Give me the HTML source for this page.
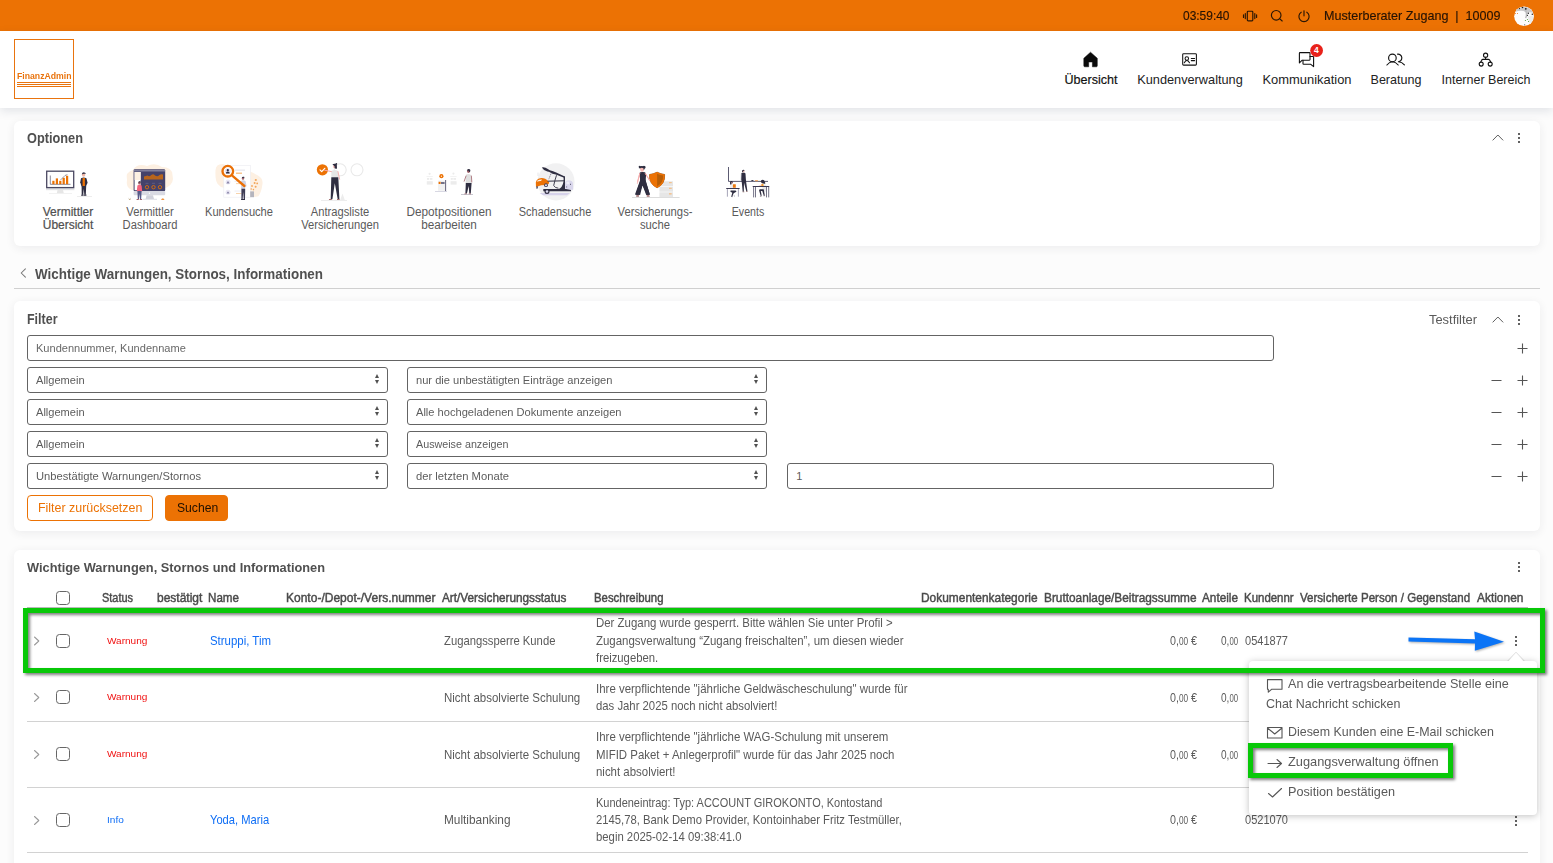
<!DOCTYPE html>
<html lang="de"><head>
<meta charset="utf-8">
<title>FinanzAdmin – Wichtige Warnungen, Stornos, Informationen</title>
<style>
*{box-sizing:border-box;margin:0;padding:0}
html,body{width:1553px;height:863px;overflow:hidden}
body{background:#fcfcfc;font-family:"Liberation Sans",sans-serif;font-size:12px;color:#333;position:relative}
.abs{position:absolute}
.t{position:absolute;white-space:nowrap;line-height:1}
svg{position:absolute;overflow:visible}
/* top bar */
#topbar{position:absolute;left:0;top:0;width:1553px;height:31px;background:#ec7204}
.tb{color:#241204;font-size:13px;-webkit-text-stroke:.15px #241204}
/* header */
#header{position:absolute;left:0;top:31px;width:1553px;height:77px;background:#fff;box-shadow:0 3px 9px rgba(50,60,90,.13)}
#logo{position:absolute;left:14px;top:39px;width:60px;height:60px;border:1px solid #e9740e;background:#fff}
#logo i{position:absolute;left:2px;width:54.2px;height:1px;background:#e9740e}
.nav{position:absolute;top:73px;font-size:13.5px;color:#222;white-space:nowrap;line-height:1}
/* cards */
.card{position:absolute;left:14px;width:1526px;background:#fff;border-radius:6px;box-shadow:0 2px 10px rgba(40,40,50,.075)}
.ctitle{position:absolute;left:27px;font-weight:bold;font-size:13.5px;color:#505050;line-height:1;white-space:nowrap}
.opt{position:absolute;top:206px;font-size:12px;line-height:13px;color:#5a5a5a;text-align:center;white-space:nowrap}
/* filter */
.inp{position:absolute;height:26px;border:1px solid #646464;border-radius:3px;background:#fff}
.it{position:absolute;left:8px;top:7px;font-size:11px;color:#5c5c5c;line-height:1;white-space:nowrap}
.ph .it{color:#686868}
.sel:after{content:"";position:absolute;right:8px;top:6.3px;border:2.6px solid transparent;border-bottom:4.2px solid #505050;border-top:0}
.sel:before{content:"";position:absolute;right:8px;top:12.2px;border:2.6px solid transparent;border-top:4.2px solid #505050;border-bottom:0}
.btn{position:absolute;top:495px;height:26px;border:1px solid #ec7204;border-radius:4px}
.btn .t{font-size:13.5px;top:5px}
/* table */
.th{position:absolute;top:590.5px;font-size:13px;color:#4a4a4a;white-space:nowrap;line-height:1;-webkit-text-stroke:.45px #4a4a4a}
.cb{position:absolute;left:56px;width:14px;height:14px;border:1px solid #666;border-radius:3.5px;background:#fff}
.sep{position:absolute;left:27px;width:1501px;height:1px;background:#d2d2d2}
.c{position:absolute;white-space:nowrap;font-size:13px;color:#5a5a5a;line-height:1}
.c small{font-size:10px}
.dl{position:absolute;left:596px;font-size:13px;line-height:1;color:#5a5a5a;white-space:nowrap}
.st{position:absolute;font-size:9.3px;line-height:1;white-space:nowrap}
.red{color:#f01212}.blue{color:#0f6ef5}
/* overlay */
.gbox{position:absolute;border:5px solid #08c808;filter:drop-shadow(2px 2px 1.6px rgba(0,0,0,.5))}
#pop{position:absolute;left:1249px;top:661px;width:288px;height:154px;background:#fff;border-radius:4px;box-shadow:0 1px 7px rgba(0,0,0,.25)}
.pi{position:absolute;white-space:nowrap;line-height:1;color:#5a5a5a;font-size:13px}
</style>
</head>
<body>

<!-- ============ TOP BAR ============ -->
<div id="topbar"></div>
<span class="t tb" style="left:1183px;top:9px;transform:scaleX(0.919);transform-origin:0 50%">03:59:40</span>
<span class="t tb" style="left:1323.9px;top:9px;transform:scaleX(0.967);transform-origin:0 50%">Musterberater Zugang&nbsp; |&nbsp; 10009</span>


<!-- ============ HEADER ============ -->
<div id="header"></div>
<div id="logo"><span class="t" style="left:1.8px;top:31.8px;font-size:9px;font-weight:bold;color:#e9740e;transform:scaleX(0.966);transform-origin:0 50%">FinanzAdmin</span><i style="top:42px;height:1.4px"></i><i style="top:44.3px;height:.9px"></i><i style="top:46.1px;height:.9px"></i></div>
<span class="nav" style="left:1091px;color:#111;-webkit-text-stroke:.2px #111;transform:translateX(-50%) scaleX(0.929)">Übersicht</span>
<span class="nav" style="left:1189.6px;transform:translateX(-50%) scaleX(0.944)">Kundenverwaltung</span>
<span class="nav" style="left:1306.8px;transform:translateX(-50%) scaleX(0.957)">Kommunikation</span>
<span class="nav" style="left:1396.2px;transform:translateX(-50%) scaleX(0.931)">Beratung</span>
<span class="nav" style="left:1485.8px;transform:translateX(-50%) scaleX(0.926)">Interner Bereich</span>
<!--NAVICONS-->

<!-- ============ OPTIONEN ============ -->
<div class="card" style="top:120.6px;height:125px"></div>
<span class="ctitle" style="top:130.8px;font-size:14px;transform:scaleX(0.911);transform-origin:0 50%">Optionen</span>
<span class="opt" style="left:68px;color:#505050;-webkit-text-stroke:.22px #505050;transform:translateX(-50%) scaleX(0.996)">Vermittler<br>Übersicht</span>
<span class="opt" style="left:150px;transform:translateX(-50%) scaleX(0.933)">Vermittler<br>Dashboard</span>
<span class="opt" style="left:239.4px;transform:translateX(-50%) scaleX(0.926)">Kundensuche</span>
<span class="opt" style="left:339.5px;transform:translateX(-50%) scaleX(0.932)">Antragsliste<br>Versicherungen</span>
<span class="opt" style="left:448.8px;transform:translateX(-50%) scaleX(0.98)">Depotpositionen<br>bearbeiten</span>
<span class="opt" style="left:554.6px;transform:translateX(-50%) scaleX(0.913)">Schadensuche</span>
<span class="opt" style="left:655.4px;transform:translateX(-50%) scaleX(0.937)">Versicherungs-<br>suche</span>
<span class="opt" style="left:747.6px;transform:translateX(-50%) scaleX(0.886)">Events</span>
<!--ILLUS-->
<svg style="left:0;top:0" width="1553" height="863" viewBox="0 0 1553 863" fill="none">
  <!-- 1 Vermittler Übersicht -->
  <g>
    <rect x="46" y="188" width="28.4" height="2.2" fill="#e3e3e6"></rect>
    <path d="M57.5 190 h5.5 l.8 3.2 h-7z" fill="#e6e6e6"></path><rect x="49" y="193.3" width="23" height=".7" fill="#ececec"></rect>
    <rect x="46.7" y="171.2" width="27" height="16.4" fill="#fff" stroke="#4b4962" stroke-width="1.3"></rect>
    <path d="M50.3 175.5 V184.3 H70.5" stroke="#3f3d56" stroke-width=".6"></path>
    <g fill="#ec7204"><rect x="52.3" y="180.8" width="2.2" height="3.4"></rect><rect x="55.8" y="178.4" width="2.2" height="5.8"></rect><rect x="59.2" y="180.8" width="2.2" height="3.4"></rect><rect x="62.6" y="177.8" width="2.2" height="6.4"></rect><rect x="66" y="175.8" width="2.2" height="8.4"></rect></g>
    <path d="M60.5 180 L65 175.5 L67.4 174.6" stroke="#3f3d56" stroke-width=".5"></path>
    <rect x="77" y="196" width="15" height=".7" fill="#e6e6e6"></rect>
    <ellipse cx="83.6" cy="174.8" rx="1.7" ry="1.9" fill="#f2b8a8"></ellipse><path d="M81.8 174.4 q.4 -2.4 2.6 -2 q1.6 .4 1.2 1.6 q-2 -.6 -3.8 .4z" fill="#2f2e41"></path>
    <path d="M81 178.2 q2.6 -1.6 5.4 0 l1.2 4.6 l-1.6 3.4 h-4.6 l-1.2 -4z" fill="#2f2e41"></path>
    <rect x="82.6" y="178" width="2.3" height="8" fill="#ec7204"></rect>
    <path d="M81.6 186 h4.6 l-.4 8.8 h-1.5 l-.5 -6 l-.6 6 h-1.5z" fill="#2f2e41"></path>
    <path d="M81.6 194.6 h2 v1.2 h-2.6z M84.4 194.6 h2 v1.2 h-2.6z" fill="#2f2e41"></path>
  </g>
  <!-- 2 Vermittler Dashboard -->
  <g>
    <path d="M127 180 q-2 -8 6 -10 q4 -7 14 -4 q8 -4 15 1 q10 0 10.5 8 q2 8 -5 12 q-6 4 -36 3 q-6 -3 -4.500 -10z" fill="#fdf0e2"></path>
    <rect x="133.6" y="191" width="31.6" height="4.3" rx="1" fill="#d9dae3"></rect>
    <path d="M146.600 195.300 h6.400 l1 3.600 h-8.400z" fill="#d0d1db"></path><rect x="142.500" y="198.800" width="14.500" height=".9" fill="#d9dae3"></rect>
    <rect x="133.6" y="169.200" width="31.600" height="21.900" rx="1.2" fill="#44426a"></rect>
    <rect x="133.6" y="170.600" width="31.600" height=".6" fill="#dcdce8"></rect>
    <rect x="134.600" y="172" width="6" height="18.200" fill="#fff"></rect><rect x="134.600" y="172" width="6" height="8" fill="#fdf0e2"></rect>
    <path d="M144 179.600 v-3 q2 -.4 3.600 -1 q2 1.600 4 -.8 q1.600 -1.400 3.400 .6 q2.400 1.800 4.400 -.4 q1.800 -1.400 3.600 -.4 v5z" fill="#b8651c"></path>
    <g stroke="#d96e0c" stroke-width=".9"><circle cx="147" cy="187.200" r="1.700"></circle><circle cx="153.500" cy="187.200" r="1.700"></circle><circle cx="160" cy="187.200" r="1.700"></circle></g>
    <g stroke="#77759a" stroke-width=".5"><path d="M145.500 183.300 h3 M152 183.300 h3 M158.500 183.300 h3"></path></g>
    <circle cx="149.500" cy="193.200" r=".7" fill="#fff"></circle>
    <ellipse cx="139.400" cy="183" rx="1.300" ry="1.500" fill="#a0616a"></ellipse><path d="M138.200 182.600 q.6 -1.800 2.400 -1 q.6 .4 .2 1z" fill="#2f2e41"></path>
    <path d="M137.400 185.400 q2 -1.200 4.200 0 l.6 5.800 h-5.400z" fill="#f4627c"></path>
    <path d="M137.400 191 h4.200 l-.4 8 h-1.200 l-.5 -5.600 l-.5 5.600 h-1.200z" fill="#575a89"></path>
    <path d="M136.800 199 h2 v.9 h-2.400z M140 199 h2 v.9 h-2.400z" fill="#a0616a"></path>
    <path d="M128.500 197.600 l1.200 1.800 l1.200 -1.800 l-.6 2.400 h-1.200z" fill="#b9a27c"></path><path d="M161 199.800 q1.800 -2.400 3.600 0z" fill="#ec7204"></path>
  </g>
  <!-- 3 Kundensuche -->
  <g>
    <path d="M224.500 164.200 q-8.500 -1.200 -9 6 q-.5 10 2 13.500 q2.500 3.500 7 4.300z M250 171.600 q4 1.600 8 4 q5.400 3 4.400 9 q-1 8 -4 11.600 q-4 1.400 -8.400 .4z" fill="#fdf0e2"></path>
    <rect x="223.800" y="165.500" width="26.600" height="31.700" fill="#fff" stroke="#ececf1" stroke-width=".6"></rect>
    <circle cx="227.800" cy="171.200" r="2.900" fill="#e7e3f3"></circle><path d="M226 172.600 q1.800 -2 3.600 0 v1 h-3.600z" fill="#2f2e41"></path><circle cx="227.800" cy="170.200" r="1.100" fill="#2f2e41"></circle>
    <circle cx="228" cy="182" r="2.500" fill="#ebe8f5"></circle><path d="M226.500 183.600 q1.500 -4.600 3 0z" fill="#8b88aa"></path>
    <circle cx="228" cy="192.200" r="2.500" fill="#ebe8f5"></circle><path d="M226.600 193.600 q1.400 -4 2.800 0z" fill="#8b88aa"></path>
    <rect x="234.500" y="169.600" width="10.500" height="1.100" fill="#e4e4ec"></rect><rect x="236" y="172.600" width="6" height="1.200" fill="#f5b676"></rect>
    <rect x="234.500" y="181" width="7" height=".9" fill="#ececf2"></rect><rect x="236" y="183.200" width="5" height=".9" fill="#f7cfa3"></rect>
    <rect x="234.500" y="190.600" width="8.500" height=".9" fill="#ececf2"></rect><rect x="236" y="193" width="5.500" height=".9" fill="#f7cfa3"></rect>
    <ellipse cx="243" cy="178.400" rx="1.200" ry="1.400" fill="#a0616a"></ellipse><path d="M241.800 178 q.4 -1.800 2.200 -1.200 q.8 .4 .4 1z" fill="#2f2e41"></path>
    <path d="M241 181 q2.400 -1.400 4.600 .2 l1 5 l-1.200 .6 l-.4 2.200 h-3.800z" fill="#cfd3e3"></path>
    <path d="M241.400 188.800 h3.800 l-.2 10.200 h-1.300 l-.5 -7 l-.5 7 h-1.300z" fill="#3f3d56"></path>
    <path d="M241.200 199 h3.800 v.9 h-4z" fill="#2f2e41"></path>
    <circle cx="227.800" cy="171.200" r="5.300" stroke="#ea7006" stroke-width="2.300"></circle>
    <path d="M232.200 175.600 L244.400 186" stroke="#ea7006" stroke-width="2.300" stroke-linecap="round"></path>
    <rect x="250.200" y="191.400" width="3.800" height="5.800" fill="#b5b5bd"></rect>
    <g fill="#f2a65c"><circle cx="255.800" cy="180" r="1.100"></circle><circle cx="254.600" cy="183" r="1"></circle><circle cx="257.200" cy="183.400" r=".9"></circle><circle cx="252" cy="186" r=".9"></circle><circle cx="255.600" cy="186.800" r="1"></circle><circle cx="251.200" cy="189" r=".8"></circle><circle cx="253.400" cy="189.600" r=".8"></circle></g>
  </g>
  <!-- 4 Antragsliste -->
  <g>
    <circle cx="340.200" cy="169.800" r="6" stroke="#e9e9e9" stroke-width="1.100"></circle><circle cx="357" cy="169.800" r="6" stroke="#e9e9e9" stroke-width="1.100"></circle>
    <circle cx="322.400" cy="169.800" r="5.600" fill="#ec7204"></circle><path d="M320 169.900 l1.700 1.700 l3.100 -3.300" stroke="#fff" stroke-width="1.200" stroke-linecap="round" stroke-linejoin="round"></path>
    <rect x="321" y="200.200" width="26" height=".7" fill="#e6e6e6"></rect>
    <path d="M340.200 200 l2.300 -6.400 l2.300 6.400z" fill="#ededed"></path>
    <ellipse cx="334.800" cy="166.400" rx="1.700" ry="1.900" fill="#f7b9b4"></ellipse>
    <path d="M332.400 164.600 q1 -1.200 3 -.8 q.6 -1.200 1.600 -.6 q.6 .8 -.2 1.400 l.2 4 q-1.800 .6 -2.400 -.6 q.4 -1.800 -.8 -2.600z" fill="#2f2e41"></path>
    <path d="M331.400 171 q3.300 -1.800 6.600 0 l.3 6.300 h-7z" fill="#e6e6e6"></path>
    <path d="M331.400 171.600 L324.600 170.200" stroke="#f7a8a8" stroke-width="1" stroke-linecap="round"></path>
    <path d="M338 171.600 l1.600 7.600" stroke="#f7a8a8" stroke-width=".9" stroke-linecap="round"></path>
    <path d="M331.300 177.200 h7 l1.100 22 h-1.700 l-2.900 -16 l-2.400 16 h-1.700z" fill="#2f2e41"></path>
    <path d="M329.200 199.100 h2.600 v1 h-3z M337 199.100 h2.600 v1 h-2.600z" fill="#a36d6d"></path>
  </g>
  <!-- 5 Depotpositionen -->
  <g>
    <g fill="#ececec"><rect x="426.500" y="176.200" width="6.400" height=".6"></rect><rect x="427" y="178" width="2" height="1.800"></rect><rect x="429.800" y="178" width="2.600" height="1.800"></rect><rect x="426.800" y="181.200" width="6" height="3.400"></rect><circle cx="429.600" cy="173.800" r="1.100"></circle>
    <rect x="450.200" y="176.200" width="6.400" height=".6"></rect><rect x="450.800" y="178" width="2" height="1.800"></rect><rect x="453.400" y="178" width="2.600" height="1.800"></rect><rect x="450.600" y="181.200" width="6" height="3.400"></rect><circle cx="453.400" cy="173.600" r="1.100"></circle></g>
    <rect x="438" y="180.600" width="7.600" height="10.200" fill="#f1f1f1"></rect>
    <rect x="438.600" y="181.800" width="2" height="2.200" fill="#ec7204"></rect><rect x="441" y="182.200" width="3.600" height="1.600" fill="#55536e"></rect>
    <rect x="445.200" y="180" width=".9" height="11.200" fill="#55536e"></rect>
    <rect x="435" y="191" width="12" height=".8" fill="#cfcfdc"></rect>
    <circle cx="441.400" cy="176.200" r="2.100" fill="#ec7204"></circle><circle cx="441.400" cy="176.200" r=".6" fill="#fff"></circle>
    <rect x="461" y="194" width="12" height=".8" fill="#b9b9c4"></rect>
    <ellipse cx="468.500" cy="171.200" rx="1.500" ry="1.700" fill="#a0616a"></ellipse><path d="M466.800 170.600 q.4 -2 2.400 -1.600 q1.400 .4 1.200 2 q-.6 1.400 -1.400 1 q.2 -1.400 -2.200 -1.400z" fill="#2f2e41"></path>
    <path d="M466 174.600 q2.600 -1.600 5 .4 l.8 8.200 h-6.200z" fill="#e0e0e0"></path>
    <path d="M466 176 l-1.800 5.200" stroke="#a0616a" stroke-width=".8" stroke-linecap="round"></path><path d="M471.400 176 l.4 6" stroke="#a0616a" stroke-width=".8" stroke-linecap="round"></path>
    <path d="M465.800 183 h5.800 l-.8 10.600 h-1.500 l-.6 -7.600 l-1.800 7.600 h-1.500z" fill="#2f2e41"></path>
    <path d="M464.600 193.400 h2.200 v.8 h-2.600z M468.800 193.400 h2.200 v.8 h-2.400z" fill="#a0616a"></path>
  </g>
  <!-- 6 Schadensuche -->
  <g>
    <circle cx="556" cy="181.900" r="18.600" fill="#f1f1f2"></circle>
    <path d="M539.600 193 H570 L567 195.300 H543z" fill="#d6d2ea"></path>
    <path d="M538 172.600 V176" stroke="#dcdce2" stroke-width=".7"></path>
    <path d="M565.200 182.400 q.4 -2 2.800 -2 h2 q2.400 .2 2.900 2.600 l.3 6.800 h-8z" fill="#d9d6ec"></path>
    <rect x="566.400" y="181.600" width="3" height="2.600" fill="#eeedf6"></rect><rect x="570" y="183.800" width=".9" height="1" fill="#3f3d56"></rect><rect x="566.400" y="186.400" width=".7" height="1.100" fill="#3f3d56"></rect>
    <path d="M535.800 182.400 q.4 -2.600 2.600 -3.600 q3.400 -1.400 6.800 0 l2.200 1.400 l1.800 2.400 l-.6 1.400 l-3 1 l-4.400 .2 l-5.200 1.800z" fill="#ec7204"></path>
    <path d="M537.200 180.800 q2 -1.600 4.800 -1.400 l-1 1.600 q-2 -.2 -3.800 .8z" fill="#fff" opacity=".9"></path>
    <circle cx="546" cy="185.200" r="1.900" fill="#3f3d56"></circle><circle cx="546" cy="185.200" r="1" fill="#e8e6f2"></circle>
    <path d="M536.400 186.600 q.8 -.6 1.600 0 l-.4 2 q-.8 .4 -1.200 -.2z" fill="#3f3d56"></path>
    <path d="M541.800 167.400 q3.200 -.6 6 1.600 q1.400 .8 2 1.200 q3.400 .6 6.400 2.400 l8.600 3.800 v1.600 l-9 -3.400 q-3.400 -.6 -6.400 -2.600 q-.6 -.4 -2 -.6 q-3.600 -.6 -5.600 -4z" fill="#2f2e41"></path>
    <path d="M551.600 172.200 L548.700 179.400" stroke="#3f3d56" stroke-width=".6" stroke-dasharray="1.200 .7"></path>
    <path d="M556.400 175.600 q-1.600 4.600 -2.700 10 q1.400 2.400 4.300 2.600" stroke="#2f2e41" stroke-width=".9" stroke-linecap="round"></path>
    <path d="M547.600 181.200 L564.200 180.800" stroke="#2f2e41" stroke-width="1"></path>
    <path d="M563.600 176.400 h1.400 V189.600 H557.500 q5.200 -1.400 6.100 -8.600z" fill="#2f2e41"></path>
    <path d="M543.300 189.100 H566 l5 .8 v1.400 H543.300z" fill="#2f2e41"></path>
    <circle cx="547" cy="191.500" r="2.500" fill="#2f2e41"></circle><circle cx="547" cy="191.500" r="1.300" fill="#dcd9ee"></circle>
  </g>
  <!-- 7 Versicherungssuche -->
  <g>
    <rect x="632" y="197.100" width="47.600" height=".8" fill="#d3d3d3"></rect>
    <g fill="#e6e6e6"><rect x="659.400" y="181.300" width="13.600" height="4.900"></rect><rect x="659.400" y="186.800" width="13.600" height="4.900"></rect><rect x="659.400" y="192.300" width="13.600" height="4.800"></rect></g>
    <g fill="#f5bd84"><rect x="669" y="182.200" width="2.600" height=".9"></rect><rect x="669" y="187.900" width="2.600" height=".9"></rect><rect x="669" y="193.400" width="2.600" height=".9"></rect></g>
    <path d="M657.100 172.200 q3.600 1.800 7.500 2.300 q.8 9.200 -7.500 13.300 q-8.300 -4.100 -7.500 -13.300 q3.900 -.5 7.500 -2.300z" fill="#ec7204" stroke="#5a3410" stroke-width=".6"></path>
    <path d="M657.100 174 q2.900 1.300 5.800 1.700 q.4 7 -5.800 10.300z" fill="#ba5f06"></path>
    <ellipse cx="642.100" cy="169.900" rx="1.700" ry="1.900" fill="#f7b9b4"></ellipse>
    <path d="M638.800 167.400 q.6 -1.500 2 -.6 q1.300 -.7 2.500 -.2 q1.300 -1.300 2.300 .2 q.2 1.500 -1 2 q-.2 1 -.8 1.400 q-.2 -1.600 -1.400 -1.700 q-1.500 .5 -2.400 -.2 q-1.300 .3 -1.200 -.9z" fill="#2f2e41"></path>
    <path d="M639.600 172.900 q3.200 -1.200 6.200 0 l.2 3 l-.6 3.600 l4.400 14.900 l-3.600 .6 l-3.700 -10.100 l-2.400 10.100 l-5.100 -.6 l5.400 -14.900 l-.8 -3.400z" fill="#2f2e41"></path>
    <path d="M639.700 173.800 l-2.300 9.600" stroke="#f9b1b1" stroke-width=".9" stroke-linecap="round"></path><path d="M645.700 173.800 l4.200 7" stroke="#f9b1b1" stroke-width=".9" stroke-linecap="round"></path>
    <path d="M636.800 195.500 h2.200 v1.100 h-2.600z M647 195.500 h2.200 l.6 1.100 h-2.800z" fill="#8a6870"></path>
  </g>
    <g fill="#f5c08a"><rect x="669" y="182.200" width="2.600" height=".9"></rect><rect x="669" y="187.800" width="2.600" height=".9"></rect><rect x="669" y="193.400" width="2.600" height=".9"></rect></g>
    <path d="M657.100 172 q3.600 1.800 7.600 2.400 q.8 9.400 -7.600 13.600 q-8.400 -4.200 -7.600 -13.600 q4 -.6 7.600 -2.400z" fill="#ec7204"></path>
    <path d="M657.100 173.800 q3 1.400 6 1.800 q.4 7.400 -6 10.800z" fill="#b85e06"></path>
    <ellipse cx="641.800" cy="168.800" rx="1.700" ry="1.900" fill="#f7b9b4"></ellipse>
    <path d="M638.600 166.600 q.8 -1.400 2 -.4 q1.200 -.6 2.400 0 q1.200 -1 2 .4 q-.2 1.400 -1.400 1.600 q-1.800 -1 -3.600 0 q-1.200 -.200 -1.400 -1.600z" fill="#2f2e41"></path>
    <path d="M639.800 172.600 q2.600 -1.400 5.400 0 l.5 8.600 l4.300 13.600 l-3 .2 l-4.400 -9.400 l-4 9.400 l-3.100 -.2 l4.600 -13.600z" fill="#2f2e41"></path>
    <path d="M639.800 173.400 l-2.200 8" stroke="#f7a8a8" stroke-width=".9" stroke-linecap="round"></path><path d="M645.200 173.400 l4.200 6.800" stroke="#f7a8a8" stroke-width=".9" stroke-linecap="round"></path>
    <path d="M636.400 195.200 h2.400 v1.400 h-2.800z M646.600 195.200 h2.400 l.6 1.400 h-3z" fill="#a36d6d"></path>
  
  <!-- 8 Events -->
  <g>
    <path d="M728.500 167 V181.400 H768" stroke="#4a4862" stroke-width=".9"></path>
    <path d="M751.100 181 q.2 -1.100 1.300 -1.100 q1.100 0 1.300 1.100z" fill="#2f2e41"></path><rect x="755" y="180.100" width="3" height="1.100" rx=".3" fill="#f2b06a"></rect>
    <!-- standing -->
    <ellipse cx="743.400" cy="171.300" rx="1.050" ry="1.250" fill="#f0b8ae"></ellipse><path d="M742 171.600 q-.2 -1.800 1.400 -1.900 q1 0 1.300 .7 q-1 .1 -1.300 .6 q-.4 .8 -.6 1.500z" fill="#2f2e41"></path>
    <path d="M741.200 173.700 q.2 -.9 1.100 -.9 h2.100 q1 0 1.100 .9 l.4 5.800 l.4 3.400 l1.100 8.100 l-1.100 .3 l-2.300 -8.600 l-.2 9 h-1.100 l-.9 -9.300 l-.6 -3z" fill="#2f2e41"></path>
    <path d="M741 174 l-.5 6.600" stroke="#e4e4e8" stroke-width=".7" stroke-linecap="round"></path>
    <path d="M742.800 191.600 h1.500 v.6 h-1.700z M746 191.300 l1.400 -.2 l.4 .6 l-1.600 .3z" fill="#8f6a6a"></path>
    <!-- left desk + person -->
    <circle cx="731.400" cy="182.300" r="1.350" fill="#2f2e41"></circle><path d="M730.200 182.400 h1.400 l.3 2.300 h-1.900z" fill="#2f2e41"></path><circle cx="731.900" cy="183" r=".75" fill="#f0b8ae"></circle>
    <path d="M730.300 184.600 q1.300 -.8 2.400 0 l.5 3.400 h-3.300z" fill="#f1f1f3"></path>
    <rect x="732.900" y="184.300" width="2.900" height="3.500" rx=".3" fill="#ec7a10"></rect>
    <rect x="726.100" y="188" width="13.600" height="1.100" rx=".4" fill="#3b3950"></rect>
    <path d="M727.400 189.100 V196.700 M738.400 189.100 V196.700" stroke="#8f8da4" stroke-width=".8"></path>
    <path d="M730.600 190.400 h4.800 q1.300 .3 .9 1.400 l-2.600 1.400 l-1.400 3.200 l-.9 -.4 l.9 -3.200 l-1.900 -1z" fill="#2f2e41"></path>
    <path d="M731.600 196 l1 .5 l-.5 .7 l-1 -.6z M733.800 195.200 l.9 .9 l-.6 .5z" fill="#2f2e41"></path>
    <!-- right desk + person -->
    <rect x="762.400" y="184.400" width="3.900" height="7.300" rx="1.200" fill="#e8e8ea"></rect>
    <path d="M760.700 181.800 q.1 -2 2 -2 q1.900 .1 2 1.900 q.8 1 .6 1.900 q-1 .5 -1.900 -.2 q-1.500 .3 -2.700 -1.600z" fill="#2f2e41"></path>
    <path d="M761.300 184 q1 -.6 2.100 0 l.3 2.600 h-2.500z" fill="#f09a2e"></path>
    <path d="M761.400 185 l-2.800 1.300" stroke="#f0b8ae" stroke-width=".7" stroke-linecap="round"></path>
    <rect x="752.600" y="186" width="16.800" height="1.050" rx=".4" fill="#3b3950"></rect>
    <path d="M753.600 187 V197.400 M755.500 187 V197.400 M766.500 187 V197.400 M768.700 187 V197.400" stroke="#4a4862" stroke-width=".75"></path>
    <path d="M759.600 189.200 h3.600 q.9 .2 .7 1.100 l.9 5.200 l-1 .3 l-1.500 -4.700 h-1.500 l.9 4.700 l-1 .3 l-1.600 -5.600z" fill="#2f2e41"></path>
    <path d="M760 196 h1.500 v.6 h-1.700z M763.600 195.600 l1.300 -.2 l.3 .6 l-1.500 .3z" fill="#6a5560"></path>
  </g>
</svg>
<!--/ILLUS-->

<!-- ============ SECTION HEADING ============ -->
<span class="t" style="left:35px;top:268px;font-size:13.8px;font-weight:bold;color:#505050;transform:scaleX(0.973);transform-origin:0 50%">Wichtige Warnungen, Stornos, Informationen</span>
<div class="abs" style="left:14px;top:288px;width:1526px;height:1px;background:#d0d0d0"></div>

<!-- ============ FILTER ============ -->
<div class="card" style="top:301px;height:230px"></div>
<span class="ctitle" style="top:313.2px;font-size:13.8px;transform:scaleX(0.904);transform-origin:0 50%">Filter</span>
<span class="t" style="left:1429.4px;top:313px;font-size:13px;color:#5a5a5a;transform:scaleX(0.992);transform-origin:0 50%">Testfilter</span>
<div class="inp ph" style="left:27px;top:335px;width:1247px;height:25.5px"><span class="it" style="left:8.2px;transform:scaleX(1.004);transform-origin:0 50%">Kundennummer, Kundenname</span></div>
<div class="inp sel" style="left:27px;top:367px;width:361px"><span class="it" style="left:8.2px;transform:scaleX(1.006);transform-origin:0 50%">Allgemein</span></div>
<div class="inp sel" style="left:407px;top:367px;width:360px"><span class="it" style="left:8.2px;transform:scaleX(1.01);transform-origin:0 50%">nur die unbestätigten Einträge anzeigen</span></div>
<div class="inp sel" style="left:27px;top:399px;width:361px"><span class="it" style="left:8.2px;transform:scaleX(1.006);transform-origin:0 50%">Allgemein</span></div>
<div class="inp sel" style="left:407px;top:399px;width:360px"><span class="it" style="left:8.2px;transform:scaleX(1.009);transform-origin:0 50%">Alle hochgeladenen Dokumente anzeigen</span></div>
<div class="inp sel" style="left:27px;top:431px;width:361px"><span class="it" style="left:8.2px;transform:scaleX(1.006);transform-origin:0 50%">Allgemein</span></div>
<div class="inp sel" style="left:407px;top:431px;width:360px"><span class="it" style="left:8.2px;transform:scaleX(0.976);transform-origin:0 50%">Ausweise anzeigen</span></div>
<div class="inp sel" style="left:27px;top:463px;width:361px"><span class="it" style="left:8.2px;transform:scaleX(1.017);transform-origin:0 50%">Unbestätigte Warnungen/Stornos</span></div>
<div class="inp sel" style="left:407px;top:463px;width:360px"><span class="it" style="left:8.2px;transform:scaleX(1.021);transform-origin:0 50%">der letzten Monate</span></div>
<div class="inp" style="left:787px;top:463px;width:487px"><span class="it" style="left:8.2px">1</span></div>
<div class="btn" style="left:27px;width:126px;background:#fff"><span class="t" style="left:10px;color:#ec7204;transform:scaleX(0.921);transform-origin:0 50%">Filter zurücksetzen</span></div>
<div class="btn" style="left:165px;width:63px;background:#ec7204"><span class="t" style="left:10.5px;color:#1e0f00;transform:scaleX(0.9);transform-origin:0 50%">Suchen</span></div>
<!--FILTERICONS-->

<!-- ============ TABLE ============ -->
<div class="card" style="top:550px;height:330px"></div>
<span class="ctitle" style="top:561.3px;font-size:13.5px;transform:scaleX(0.948);transform-origin:0 50%">Wichtige Warnungen, Stornos und Informationen</span>
<div class="cb" style="top:590.5px"></div>
<span class="th" style="left:102px;transform:scaleX(0.841);transform-origin:0 50%">Status</span>
<span class="th" style="left:156.5px;transform:scaleX(0.922);transform-origin:0 50%">bestätigt</span>
<span class="th" style="left:208px;transform:scaleX(0.894);transform-origin:0 50%">Name</span>
<span class="th" style="left:286px;transform:scaleX(0.924);transform-origin:0 50%">Konto-/Depot-/Vers.nummer</span>
<span class="th" style="left:442px;transform:scaleX(0.906);transform-origin:0 50%">Art/Versicherungsstatus</span>
<span class="th" style="left:594px;transform:scaleX(0.874);transform-origin:0 50%">Beschreibung</span>
<span class="th" style="left:921px;transform:scaleX(0.917);transform-origin:0 50%">Dokumentenkategorie</span>
<span class="th" style="left:1043.7px;transform:scaleX(0.91);transform-origin:0 50%">Bruttoanlage/Beitragssumme</span>
<span class="th" style="left:1202px;transform:scaleX(0.906);transform-origin:0 50%">Anteile</span>
<span class="th" style="left:1243.8px;transform:scaleX(0.881);transform-origin:0 50%">Kundennr</span>
<span class="th" style="left:1299.7px;transform:scaleX(0.888);transform-origin:0 50%">Versicherte Person / Gegenstand</span>
<span class="th" style="left:1477px;transform:scaleX(0.917);transform-origin:0 50%">Aktionen</span>
<div class="sep" style="top:607px;background:#bdbdbd"></div>
<!--ROWS-->
<!-- row 1 -->
<div class="cb" style="top:634px"></div>
<span class="st red" style="left:106.8px;top:636.6px;transform:scaleX(1.08);transform-origin:0 50%">Warnung</span>
<span class="c blue" style="left:210.2px;top:633.8px;transform:scaleX(0.879);transform-origin:0 50%">Struppi, Tim</span>
<span class="c" style="left:443.5px;top:633.8px;transform:scaleX(0.866);transform-origin:0 50%">Zugangssperre Kunde</span>
<span class="dl" style="top:616px;transform:scaleX(0.88);transform-origin:0 50%">Der Zugang wurde gesperrt. Bitte wählen Sie unter Profil &gt;</span>
<span class="dl" style="top:633.8px;transform:scaleX(0.881);transform-origin:0 50%">Zugangsverwaltung “Zugang freischalten”, um diesen wieder</span>
<span class="dl" style="top:650.9px;transform:scaleX(0.869);transform-origin:0 50%">freizugeben.</span>
<span class="c" style="left:1169.6px;top:633.8px;transform:scaleX(0.823);transform-origin:0 50%">0,<small>00</small> €</span>
<span class="c" style="left:1220.6px;top:633.8px;transform:scaleX(0.774);transform-origin:0 50%">0,<small>00</small></span>
<span class="c" style="left:1244.8px;top:633.8px;transform:scaleX(0.849);transform-origin:0 50%">0541877</span>
<!-- row 2 -->
<div class="cb" style="top:690px"></div>
<span class="st red" style="left:106.8px;top:693.1px;transform:scaleX(1.08);transform-origin:0 50%">Warnung</span>
<span class="c" style="left:443.5px;top:691.4px;transform:scaleX(0.885);transform-origin:0 50%">Nicht absolvierte Schulung</span>
<span class="dl" style="top:682.1px;transform:scaleX(0.882);transform-origin:0 50%">Ihre verpflichtende "jährliche Geldwäscheschulung" wurde für</span>
<span class="dl" style="top:698.8px;transform:scaleX(0.871);transform-origin:0 50%">das Jahr 2025 noch nicht absolviert!</span>
<span class="c" style="left:1169.6px;top:691.4px;transform:scaleX(0.823);transform-origin:0 50%">0,<small>00</small> €</span>
<span class="c" style="left:1220.6px;top:691.4px;transform:scaleX(0.774);transform-origin:0 50%">0,<small>00</small></span>
<div class="sep" style="top:721px"></div>
<!-- row 3 -->
<div class="cb" style="top:747px"></div>
<span class="st red" style="left:106.8px;top:750.1px;transform:scaleX(1.08);transform-origin:0 50%">Warnung</span>
<span class="c" style="left:443.5px;top:747.5px;transform:scaleX(0.885);transform-origin:0 50%">Nicht absolvierte Schulung</span>
<span class="dl" style="top:730.2px;transform:scaleX(0.882);transform-origin:0 50%">Ihre verpflichtende "jährliche WAG-Schulung mit unserem</span>
<span class="dl" style="top:747.5px;transform:scaleX(0.879);transform-origin:0 50%">MIFID Paket + Anlegerprofil" wurde für das Jahr 2025 noch</span>
<span class="dl" style="top:764.7px;transform:scaleX(0.88);transform-origin:0 50%">nicht absolviert!</span>
<span class="c" style="left:1169.6px;top:747.5px;transform:scaleX(0.823);transform-origin:0 50%">0,<small>00</small> €</span>
<span class="c" style="left:1220.6px;top:747.5px;transform:scaleX(0.774);transform-origin:0 50%">0,<small>00</small></span>
<div class="sep" style="top:787px"></div>
<!-- row 4 -->
<div class="cb" style="top:813px"></div>
<span class="st blue" style="left:107.4px;top:816.1px;transform:scaleX(1.083);transform-origin:0 50%">Info</span>
<span class="c blue" style="left:210.2px;top:812.9px;transform:scaleX(0.858);transform-origin:0 50%">Yoda, Maria</span>
<span class="c" style="left:443.5px;top:812.9px;transform:scaleX(0.911);transform-origin:0 50%">Multibanking</span>
<span class="dl" style="top:795.9px;transform:scaleX(0.845);transform-origin:0 50%">Kundeneintrag: Typ: ACCOUNT GIROKONTO, Kontostand</span>
<span class="dl" style="top:812.9px;transform:scaleX(0.868);transform-origin:0 50%">2145,78, Bank Demo Provider, Kontoinhaber Fritz Testmüller,</span>
<span class="dl" style="top:829.9px;transform:scaleX(0.871);transform-origin:0 50%">begin 2025-02-14 09:38:41.0</span>
<span class="c" style="left:1169.6px;top:812.9px;transform:scaleX(0.823);transform-origin:0 50%">0,<small>00</small> €</span>
<span class="c" style="left:1244.8px;top:812.9px;transform:scaleX(0.849);transform-origin:0 50%">0521070</span>
<div class="sep" style="top:852px"></div>
<!-- row chevrons + kebabs -->
<svg style="left:0;top:0" width="1553" height="863" viewBox="0 0 1553 863" fill="none">
  <g stroke="#999" stroke-width="1.05" stroke-linecap="round" stroke-linejoin="round">
    <path d="M34.5 637 L38.8 641 L34.5 645"></path><path d="M34.5 693.5 L38.8 697.5 L34.5 701.5"></path>
    <path d="M34.5 750.5 L38.8 754.5 L34.5 758.5"></path><path d="M34.5 816.5 L38.8 820.5 L34.5 824.5"></path>
  </g>
  <g fill="#616161">
    <rect x="1515" y="636" width="2" height="2"></rect><rect x="1515" y="640" width="2" height="2"></rect><rect x="1515" y="644" width="2" height="2"></rect>
    <rect x="1515" y="816" width="2" height="2"></rect><rect x="1515" y="820" width="2" height="2"></rect><rect x="1515" y="824" width="2" height="2"></rect>
  </g>
</svg>
<!--/ROWS-->

<!--ICONS-->
<svg style="left:0;top:0" width="1553" height="863" viewBox="0 0 1553 863" fill="none">
  <!-- top bar icons -->
  <g stroke="#2a1605" stroke-width="1.15" stroke-linecap="round" stroke-linejoin="round">
    <rect x="1247.3" y="11.2" width="5.5" height="9.7" rx=".8"></rect>
    <path d="M1245.3 13.6 V18.6 M1243.5 14.8 V17.4 M1254.8 13.6 V18.6 M1256.6 14.8 V17.4"></path>
    <circle cx="1276.2" cy="15.3" r="4.8"></circle><path d="M1279.8 18.8 L1282.2 21"></path>
    <path d="M1304 10.8 V15.8"></path><path d="M1301.2 12.2 A5.1 5.1 0 1 0 1306.8 12.2"></path>
  </g>
  <!-- avatar -->
  <clipPath id="avc"><circle cx="1524" cy="16.300" r="9.800"></circle></clipPath>
  <circle cx="1524" cy="16.300" r="9.800" fill="#fdfdfd"></circle>
  <g clip-path="url(#avc)">
    <path d="M1516 9.500 q6 -4 12 -2 q4 2 5.500 6 l-4 1 q-3 -2 -6 -3.500 q-4 -.5 -7.500 .5z" fill="#c9c9cb"></path>
    <path d="M1526.500 13 q4 -1.500 8 .5 v3 q-4 -1 -7.500 -.5z" fill="#f6f6f6"></path>
    <path d="M1527.500 16 h7 v7 l-4 3 q-2 -5 -3 -10z" fill="#ececec"></path>
    <path d="M1524.500 9 q1.500 1 2 4 q.5 3 -1 5" stroke="#bdbdbf" stroke-width="1.600" fill="none"></path>
    <g fill="#1c1c1e"><circle cx="1522.500" cy="7.500" r=".8"></circle><circle cx="1519.400" cy="8.600" r=".6"></circle><circle cx="1525.800" cy="8.800" r=".9"></circle><circle cx="1528.300" cy="13.300" r=".7"></circle><circle cx="1527.400" cy="15.300" r=".6"></circle><circle cx="1532.300" cy="14.300" r=".7"></circle></g>
    <g fill="#4f9a3c"><circle cx="1527.400" cy="19.500" r=".55"></circle><circle cx="1528.500" cy="21.500" r=".55"></circle><circle cx="1525.400" cy="20.500" r=".6"></circle></g>
    <g fill="#e0701a"><circle cx="1515.400" cy="13.400" r=".5"></circle><circle cx="1517.500" cy="13.400" r=".5"></circle></g>
    <rect x="1524" y="24" width="1.200" height="1.600" fill="#9aa0a8"></rect>
  </g>
  <!-- nav: home -->
  <path d="M1090.5 52.2 L1097.3 58.3 V65.8 a1 1 0 0 1 -1 1 H1092.4 V62 H1088.7 V66.8 H1084.8 a1 1 0 0 1 -1 -1 V58.3 Z" fill="#0a0a0a" stroke="#0a0a0a" stroke-width=".5" stroke-linejoin="round"></path>
  <!-- nav: id card -->
  <g stroke="#111" stroke-width="1.05" stroke-linecap="round" stroke-linejoin="round">
    <rect x="1182.7" y="53.7" width="13.7" height="11.4" rx=".9"></rect>
    <circle cx="1186.8" cy="58.500" r="1.750"></circle><path d="M1184.300 62.700 q2.500 -4.300 5.200 0 M1191.300 58.400 H1194.600 M1191.300 60.600 H1194.600"></path>
  </g>
  <!-- nav: chat -->
  <g stroke="#111" stroke-width="1.1" stroke-linecap="round" stroke-linejoin="round">
    <path d="M1299.400 53.200 q0 -.6 .6 -.6 H1309.400 q.6 0 .6 .6 V59.600 q0 .6 -.6 .6 H1302.200 L1299.400 62.900 Z"></path>
    <path d="M1310 56.500 H1313 q.6 0 .6 .6 V66.600 L1310.800 64.300 H1303.600 q-.6 0 -.6 -.6 V60.300"></path>
  </g>
  <circle cx="1316.6" cy="50.5" r="6.4" fill="#e8211a"></circle>
  <!-- nav: people -->
  <g stroke="#111" stroke-width="1.15" stroke-linecap="round" stroke-linejoin="round">
    <circle cx="1392.4" cy="57.900" r="3.800"></circle><path d="M1386.900 65 Q1389.400 61.900 1392.400 61.800 Q1395.600 61.900 1398.200 65"></path>
    <path d="M1397.600 54.150 A3.800 3.800 0 1 1 1398.400 61.750 Q1402 61.900 1404.400 64.800"></path>
  </g>
  <!-- nav: org -->
  <g stroke="#111" stroke-width="1.1" stroke-linecap="round" stroke-linejoin="round">
    <circle cx="1485.6" cy="55.200" r="2.100"></circle><circle cx="1481.200" cy="64.100" r="2"></circle><circle cx="1490.200" cy="64.100" r="2"></circle>
    <path d="M1485.600 57.400 V59.400 M1480.800 62.100 L1481.700 60.200 Q1482 59.400 1482.800 59.400 H1488.400 Q1489.200 59.400 1489.600 60.100 L1490.800 62.100"></path>
  </g>
  <!-- card chevrons + dots -->
  <g stroke="#5e5e5e" stroke-width="1" stroke-linecap="square" stroke-linejoin="miter">
    <path d="M1493 140 L1497.9 135 L1502.8 140"></path>
    <path d="M1493 322 L1497.9 317 L1502.8 322"></path>
  </g>
  <g fill="#616161">
    <rect x="1518" y="133" width="2" height="2"></rect><rect x="1518" y="137" width="2" height="2"></rect><rect x="1518" y="141" width="2" height="2"></rect>
    <rect x="1518" y="315" width="2" height="2"></rect><rect x="1518" y="319" width="2" height="2"></rect><rect x="1518" y="323" width="2" height="2"></rect>
    <rect x="1518" y="562" width="2" height="2"></rect><rect x="1518" y="566" width="2" height="2"></rect><rect x="1518" y="570" width="2" height="2"></rect>
  </g>
  <!-- heading back chevron -->
  <path d="M25.4 268.8 L21.2 273 L25.4 277.2" stroke="#777" stroke-width="1.05" stroke-linecap="round" stroke-linejoin="round"></path>
  <!-- filter plus / minus -->
  <g stroke="#555" stroke-width="1.1" stroke-linecap="butt">
    <path d="M1517.5 348.5 H1527.5 M1522.5 343.5 V353.5"></path>
    <path d="M1517.5 380.5 H1527.5 M1522.5 375.5 V385.5 M1491.5 380.5 H1501.5"></path>
    <path d="M1517.5 412.5 H1527.5 M1522.5 407.5 V417.5 M1491.5 412.5 H1501.5"></path>
    <path d="M1517.5 444.5 H1527.5 M1522.5 439.5 V449.5 M1491.5 444.5 H1501.5"></path>
    <path d="M1517.5 476.5 H1527.5 M1522.5 471.5 V481.5 M1491.5 476.5 H1501.5"></path>
  </g>
</svg>
<span class="t" style="left:1314px;top:46.3px;font-size:8.5px;font-weight:bold;color:#fff">4</span>
<!--/ICONS-->
<!--OVERLAY-->
<!-- popup -->
<svg style="left:1503px;top:650px" width="26" height="13" viewBox="0 0 26 13"><path d="M4.200 11.500 L13 2.200 L21.800 11.500" fill="#fff" stroke="#dedede" stroke-width="1"></path></svg>
<div id="pop"></div>
<svg style="left:1504px;top:652px" width="24" height="12" viewBox="0 0 24 12"><path d="M3.600 10.500 L12 1.200 L20.400 10.500 Z" fill="#fff"></path></svg>
<span class="pi" style="left:1287.6px;top:677px;transform:scaleX(0.97);transform-origin:0 50%">An die vertragsbearbeitende Stelle eine</span>
<span class="pi" style="left:1265.5px;top:697px;transform:scaleX(0.959);transform-origin:0 50%">Chat Nachricht schicken</span>
<span class="pi" style="left:1287.6px;top:725px;transform:scaleX(0.956);transform-origin:0 50%">Diesem Kunden eine E-Mail schicken</span>
<span class="pi" style="left:1287.6px;top:755px;transform:scaleX(0.985);transform-origin:0 50%">Zugangsverwaltung öffnen</span>
<span class="pi" style="left:1287.6px;top:785px;transform:scaleX(0.974);transform-origin:0 50%">Position bestätigen</span>
<svg style="left:1260px;top:672px" width="30" height="135" viewBox="1260 672 30 135" fill="none" stroke="#555" stroke-width="1.1" stroke-linejoin="round" stroke-linecap="round">
  <path d="M1267.5 679.6 H1282 V689.3 H1271.5 L1268.3 692.2 V689.3 H1267.5 Z"></path>
  <path d="M1267.5 727.5 H1282 V738 H1267.5 Z M1267.5 728 L1274.7 734 L1282 728"></path>
  <path d="M1268 763.5 H1281.5 M1277 759.5 L1281.5 763.5 L1277 767.5"></path>
  <path d="M1268.5 793.5 L1272.5 797 L1281.5 788.5"></path>
</svg>
<div class="gbox" style="left:1248px;top:743.4px;width:205px;height:34.5px"></div>
<!-- row highlight -->
<div class="gbox" style="left:23px;top:608px;width:1522.3px;height:65px"></div>
<!-- blue arrow -->
<svg style="left:1400px;top:625px" width="110" height="32" viewBox="1400 625 110 32"><path d="M1408.5 637.6 L1475 639.2 L1474.3 631.6 L1504 641.8 L1474.8 650.8 L1475 643.4 L1408.5 641.4 Z" fill="#0b74f6" style="filter:drop-shadow(1.2px 1.6px .8px rgba(0,0,0,.32))"></path></svg>
<!--/OVERLAY-->



</body></html>
